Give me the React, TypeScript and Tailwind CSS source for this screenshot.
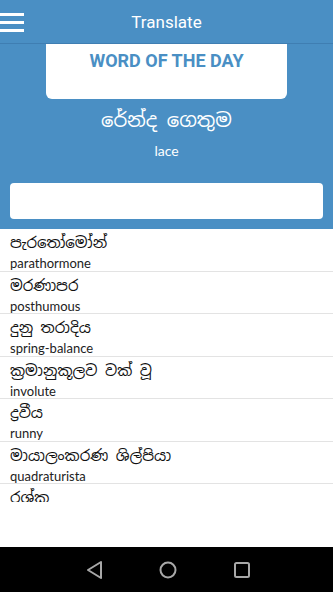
import React from 'react'

type Entry = { si: string; en: string }

const entries: Entry[] = [
  { si: 'පැරතෝමෝන්', en: 'parathormone' },
  { si: 'මරණාපර', en: 'posthumous' },
  { si: 'දුනු තරාදිය', en: 'spring-balance' },
  { si: 'ක්‍රමානුකූලව වක් වූ', en: 'involute' },
  { si: 'ද්‍රවීය', en: 'runny' },
  { si: 'මායාලංකරණ ශිල්පියා', en: 'quadraturista' },
  { si: 'රශ්ක', en: 'raskha' },
]

const sinhala = '"Noto Sans Sinhala", "Iskoola Pota", "Noto Sans", sans-serif'

export default function App() {
  return (
    <div className="flex h-[592px] w-[333px] flex-col overflow-hidden bg-white" style={{ fontFamily: 'Roboto, sans-serif' }}>
      {/* header */}
      <div className="relative flex h-[44px] shrink-0 items-center justify-center border-b border-[#3f7eb2] bg-[#4a8fc4] pt-[3px]">
        <div className="absolute left-0 top-[13px] flex w-[24px] flex-col gap-[5px]">
          <span className="h-[3px] w-full bg-white" />
          <span className="h-[3px] w-full bg-white" />
          <span className="h-[3px] w-full bg-white" />
        </div>
        <span className="text-[17px] text-white">Translate</span>
      </div>

      {/* word of the day */}
      <div className="flex h-[185px] shrink-0 flex-col items-center bg-[#4a8fc4]">
        <div className="flex h-[55px] w-[241px] justify-center rounded-b-[6px] bg-white pt-[3px]">
          <span className="text-[18px] font-bold text-[#4a8fc4]">WORD OF THE DAY</span>
        </div>
        <div className="mt-[6px] text-[19.5px] leading-[30px] text-white" style={{ fontFamily: sinhala }}>
          රේන්ද ගෙතුම
        </div>
        <div className="mt-[7px] text-[14px] leading-[18px] text-white" style={{ fontFamily: 'Lato, sans-serif' }}>
          lace
        </div>
        <div className="mt-[23px] h-[36px] w-[313px] rounded-[4px] bg-white" />
      </div>

      {/* list */}
      <div className="h-[273px] shrink-0 overflow-hidden">
        {entries.map((e) => (
          <div key={e.en} className="h-[42.5px] border-b border-[#e3e3e3] pl-[10px]">
            <div className="pt-[2px] text-[15px] leading-[24px] text-[#111]" style={{ fontFamily: sinhala }}>
              {e.si}
            </div>
            <div className="text-[13px] leading-[16px] text-[#222]" style={{ fontFamily: 'Lato, sans-serif' }}>
              {e.en}
            </div>
          </div>
        ))}
      </div>

      <div className="flex-1 bg-white" />

      {/* nav bar */}
      <div className="flex h-[45px] shrink-0 items-center justify-center gap-[50px] bg-black">
        <svg width="24" height="24" viewBox="0 0 24 24" className="ml-[2px]">
          <path d="M19 4 L6 12 L19 20 Z" fill="none" stroke="#a8a8a8" strokeWidth="2" strokeLinejoin="round" />
        </svg>
        <svg width="24" height="24" viewBox="0 0 24 24">
          <circle cx="12" cy="12" r="7.5" fill="none" stroke="#a8a8a8" strokeWidth="2" />
        </svg>
        <svg width="24" height="24" viewBox="0 0 24 24">
          <rect x="5" y="5" width="14" height="14" rx="1.5" fill="none" stroke="#a8a8a8" strokeWidth="2" />
        </svg>
      </div>
    </div>
  )
}
